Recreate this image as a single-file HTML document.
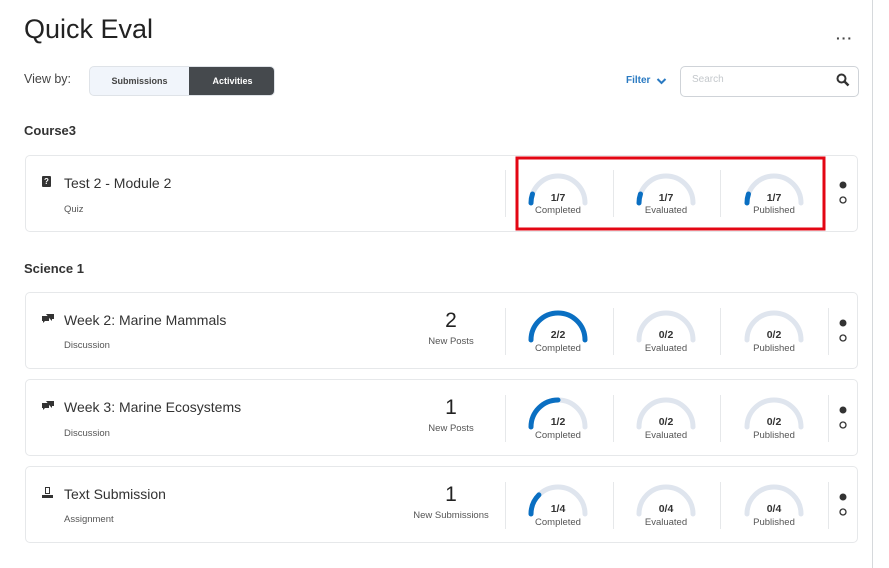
<!DOCTYPE html>
<html><head><meta charset="utf-8"><style>
*{margin:0;padding:0;box-sizing:border-box}
body{width:889px;height:568px;background:#fff;font-family:"Liberation Sans",sans-serif;color:#333;position:relative;overflow:hidden}
.a{position:absolute}
.card{position:absolute;left:25px;width:833px;height:77px;border:1px solid #e6e8ea;border-radius:5px;background:#fff}
.title{font-size:14px;color:#333}
.sub{font-size:9.5px;color:#555}
.div{position:absolute;width:1px;background:#e6e8ea}
.frac{position:absolute;font-size:10px;font-weight:bold;color:#333;text-align:center;width:60px}
.lab{position:absolute;font-size:9.5px;color:#555;text-align:center;width:70px}
.dot{position:absolute;width:7px;height:7px;border-radius:50%}
</style></head><body>
<div class="a" style="left:872px;top:0;width:1px;height:568px;background:#d6d9dc"></div>
<div class="a" style="left:24px;top:14px;font-size:27px;color:#222">Quick Eval</div>
<div class="a" style="left:836px;top:30px;font-size:14px;font-weight:bold;letter-spacing:1px;color:#444">···</div>
<div class="a" style="left:24px;top:72px;font-size:12.5px;color:#444">View by:</div>
<div class="a" style="left:89px;top:66px;width:186px;height:30px;border:1px solid #dfe3e8;border-radius:5px;background:#f1f5fb;overflow:hidden">
<div class="a" style="left:0;top:0;width:99px;height:28px;font-size:9px;font-weight:bold;color:#444;text-align:center;line-height:28px">Submissions</div>
<div class="a" style="left:99px;top:-1px;width:87px;height:30px;background:#45494d;font-size:9px;font-weight:bold;color:#fff;text-align:center;line-height:30px;border-radius:0 5px 5px 0">Activities</div>
</div>
<div class="a" style="left:626px;top:75px;font-size:10px;font-weight:bold;color:#2a7ac2">Filter</div>
<svg class="a" style="left:656px;top:77px" width="11" height="8"><path d="M1.5 2 L5.5 6 L9.5 2" stroke="#2a7ac2" stroke-width="2" fill="none"/></svg>
<div class="a" style="left:680px;top:66px;width:179px;height:31px;border:1px solid #cfd3d8;border-radius:5px;background:#fff"></div>
<div class="a" style="left:692px;top:74px;font-size:10px;color:#c4c8cc">Search</div>
<svg class="a" style="left:836px;top:73px" width="14" height="14"><circle cx="5.5" cy="5.5" r="4" stroke="#333" stroke-width="2" fill="none"/><path d="M8.5 8.5 L12.5 12.5" stroke="#333" stroke-width="2.5"/></svg>
<div class="a" style="left:24px;top:123px;font-size:13px;font-weight:bold;color:#333">Course3</div>
<div class="a" style="left:24px;top:261px;font-size:13px;font-weight:bold;color:#333">Science 1</div>

<div class="card" style="top:155px"></div>
<div class="card" style="top:292px"></div>
<div class="card" style="top:379px"></div>
<div class="card" style="top:466px"></div>

<!-- card texts -->
<div class="a" style="left:42px;top:176px;width:9px;height:11px;background:#333;border-radius:1px;color:#fff;font-size:8px;font-weight:bold;text-align:center;line-height:11px">?</div>
<div class="a title" style="left:64px;top:175px">Test 2 - Module 2</div>
<div class="a sub" style="left:64px;top:204px">Quiz</div>

<svg class="a" style="left:41px;top:313px" width="14" height="12"><path d="M1 3 h7 v5 h-4 l-2 2 v-2 h-1z M5 1 h8 v5 h-2 v2 l-2-2" fill="#333"/></svg>
<div class="a title" style="left:64px;top:312px">Week 2: Marine Mammals</div>
<div class="a sub" style="left:64px;top:340px">Discussion</div>
<svg class="a" style="left:41px;top:400px" width="14" height="12"><path d="M1 3 h7 v5 h-4 l-2 2 v-2 h-1z M5 1 h8 v5 h-2 v2 l-2-2" fill="#333"/></svg>
<div class="a title" style="left:64px;top:399px">Week 3: Marine Ecosystems</div>
<div class="a sub" style="left:64px;top:428px">Discussion</div>
<svg class="a" style="left:41px;top:486px" width="13" height="13"><path d="M4 1 h5 v7 h-5z M1 9 h11 v3 h-11z" fill="#333"/><path d="M5 2h3v5h-3z" fill="#fff"/></svg>
<div class="a title" style="left:64px;top:486px">Text Submission</div>
<div class="a sub" style="left:64px;top:514px">Assignment</div>

<div class="a" style="left:400px;top:309px;width:102px;text-align:center;font-size:21px;color:#222">2</div>
<div class="a" style="left:400px;top:336px;width:102px;text-align:center;font-size:9.5px;color:#555">New Posts</div>
<div class="a" style="left:400px;top:396px;width:102px;text-align:center;font-size:21px;color:#222">1</div>
<div class="a" style="left:400px;top:423px;width:102px;text-align:center;font-size:9.5px;color:#555">New Posts</div>
<div class="a" style="left:400px;top:483px;width:102px;text-align:center;font-size:21px;color:#222">1</div>
<div class="a" style="left:400px;top:510px;width:102px;text-align:center;font-size:9.5px;color:#555">New Submissions</div>

<svg class="a" style="left:0;top:0" width="889" height="568">
<g stroke-linecap="round" fill="none" stroke-width="5">
<!-- row centers y: 203, 340, 427, 514 ; x: 558,666,774 -->
<g id="r1">
<path d="M531 203 A27 27 0 0 1 585 203" stroke="#dfe5ee"/><path d="M531 203 A27 27 0 0 1 532.5 194" stroke="#0a6fc2"/>
<path d="M639 203 A27 27 0 0 1 693 203" stroke="#dfe5ee"/><path d="M639 203 A27 27 0 0 1 640.5 194" stroke="#0a6fc2"/>
<path d="M747 203 A27 27 0 0 1 801 203" stroke="#dfe5ee"/><path d="M747 203 A27 27 0 0 1 748.5 194" stroke="#0a6fc2"/>
</g>
<path d="M531 340 A27 27 0 0 1 585 340" stroke="#0a6fc2"/>
<path d="M639 340 A27 27 0 0 1 693 340" stroke="#dfe5ee"/>
<path d="M747 340 A27 27 0 0 1 801 340" stroke="#dfe5ee"/>
<path d="M531 427 A27 27 0 0 1 585 427" stroke="#dfe5ee"/><path d="M531 427 A27 27 0 0 1 558 400" stroke="#0a6fc2"/>
<path d="M639 427 A27 27 0 0 1 693 427" stroke="#dfe5ee"/>
<path d="M747 427 A27 27 0 0 1 801 427" stroke="#dfe5ee"/>
<path d="M531 514 A27 27 0 0 1 585 514" stroke="#dfe5ee"/><path d="M531 514 A27 27 0 0 1 538.9 494.9" stroke="#0a6fc2"/>
<path d="M639 514 A27 27 0 0 1 693 514" stroke="#dfe5ee"/>
<path d="M747 514 A27 27 0 0 1 801 514" stroke="#dfe5ee"/>
</g>
<g fill="#e6e8ea">
<rect x="505" y="170" width="1" height="47"/><rect x="613" y="170" width="1" height="47"/><rect x="720" y="170" width="1" height="47"/>
<rect x="505" y="308" width="1" height="47"/><rect x="613" y="308" width="1" height="47"/><rect x="720" y="308" width="1" height="47"/><rect x="828" y="308" width="1" height="47"/>
<rect x="505" y="395" width="1" height="47"/><rect x="613" y="395" width="1" height="47"/><rect x="720" y="395" width="1" height="47"/><rect x="828" y="395" width="1" height="47"/>
<rect x="505" y="482" width="1" height="47"/><rect x="613" y="482" width="1" height="47"/><rect x="720" y="482" width="1" height="47"/><rect x="828" y="482" width="1" height="47"/>
</g>
<g>
<circle cx="843" cy="185" r="3.5" fill="#333"/><circle cx="843" cy="200" r="3" fill="none" stroke="#333" stroke-width="1.3"/>
<circle cx="843" cy="323" r="3.5" fill="#333"/><circle cx="843" cy="338" r="3" fill="none" stroke="#333" stroke-width="1.3"/>
<circle cx="843" cy="410" r="3.5" fill="#333"/><circle cx="843" cy="425" r="3" fill="none" stroke="#333" stroke-width="1.3"/>
<circle cx="843" cy="497" r="3.5" fill="#333"/><circle cx="843" cy="512" r="3" fill="none" stroke="#333" stroke-width="1.3"/>
</g>
<rect x="517" y="158" width="307" height="71" fill="none" stroke="#e30613" stroke-width="3"/>
<g font-family="Liberation Sans, sans-serif" text-anchor="middle">
<g font-size="10.5" font-weight="bold" fill="#333">
<text x="558" y="201">1/7</text><text x="666" y="201">1/7</text><text x="774" y="201">1/7</text>
<text x="558" y="338">2/2</text><text x="666" y="338">0/2</text><text x="774" y="338">0/2</text>
<text x="558" y="425">1/2</text><text x="666" y="425">0/2</text><text x="774" y="425">0/2</text>
<text x="558" y="512">1/4</text><text x="666" y="512">0/4</text><text x="774" y="512">0/4</text>
</g>
<g font-size="9.5" fill="#555">
<text x="558" y="213">Completed</text><text x="666" y="213">Evaluated</text><text x="774" y="213">Published</text>
<text x="558" y="351">Completed</text><text x="666" y="351">Evaluated</text><text x="774" y="351">Published</text>
<text x="558" y="438">Completed</text><text x="666" y="438">Evaluated</text><text x="774" y="438">Published</text>
<text x="558" y="525">Completed</text><text x="666" y="525">Evaluated</text><text x="774" y="525">Published</text>
</g>
</g>
</svg>
</body></html>
